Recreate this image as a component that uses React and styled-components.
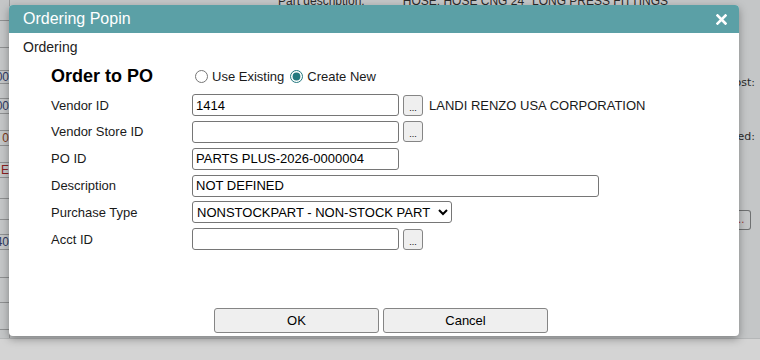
import React from 'react';
import styled, { createGlobalStyle } from 'styled-components';

const GlobalStyle = createGlobalStyle`
	html, body {
		margin: 0;
		padding: 0;
		background: #c4c6c7;
	}
	body {
		font-family: "Liberation Sans", Arial, sans-serif;
	}
`;

const Page = styled.div`
	position: relative;
	width: 760px;
	height: 360px;
	overflow: hidden;
	background: #c4c6c7;
	display: flex;
	flex-direction: column;
`;

const BackPage = styled.div`
	flex: 1;
	display: flex;
	flex-direction: row;
`;

const LeftStrip = styled.div`
	width: 9px;
	overflow: hidden;
	display: flex;
	flex-direction: column;
	border-right: 1px solid #9a9c9d;
`;

const StripCell = styled.div`
	height: ${props => props.h}px;
	border-bottom: 1px solid #8e9091;
	font-size: 12px;
	line-height: ${props => props.h}px;
	color: ${props => props.color || '#2f3a63'};
	display: flex;
	justify-content: flex-end;
	overflow: hidden;
	white-space: nowrap;
`;

const Middle = styled.div`
	flex: 1;
	display: flex;
	flex-direction: row;
	font-size: 12px;
	color: #2b2b2b;
	margin-top: -6px;
	padding-left: 268px;
	gap: 38px;
	white-space: nowrap;
`;

const RightStrip = styled.div`
	width: 22px;
	overflow: hidden;
	display: flex;
	flex-direction: column;
	font-family: "DejaVu Sans", Verdana, sans-serif;
	font-size: 11px;
	color: #2b2b2b;
	white-space: nowrap;
	padding-top: 76px;
`;

const RightText = styled.div`
	height: ${props => props.h}px;
	display: flex;
	justify-content: flex-end;
	overflow: hidden;
	padding-right: 5px;
`;

const BackButton = styled.div`
	width: 12px;
	height: 18px;
	border: 1px solid #6f7172;
	border-left: none;
	border-radius: 0 3px 3px 0;
	color: #9b2c2c;
	font-size: 10px;
	line-height: 18px;
`;

const BottomBand = styled.div`
	height: 21px;
	background: #d4d4d4;
	border-top: 1px solid #b5b7b8;
`;

const Modal = styled.div`
	position: absolute;
	left: 9px;
	top: 5px;
	width: 730px;
	height: 331px;
	background: #fff;
	border-radius: 4px;
	box-shadow: 0 3px 9px rgba(0, 0, 0, 0.35);
	display: flex;
	flex-direction: column;
`;

const Header = styled.div`
	height: 28px;
	background: #5ba0a6;
	border-radius: 4px 4px 0 0;
	display: flex;
	align-items: center;
	justify-content: space-between;
	padding: 0 12px 0 14px;
	color: #fff;
	font-size: 16px;
`;

const Body = styled.div`
	flex: 1;
	padding: 5px 14px 0;
	color: #1a1a1a;
`;

const Section = styled.div`
	font-size: 14px;
	line-height: 18px;
	color: #222;
`;

const Form = styled.div`
	display: grid;
	grid-template-columns: 141px auto;
	grid-auto-rows: 26.8px;
	align-items: center;
	padding-left: 28px;
	margin-top: 9px;
	font-size: 13px;
`;

const Title = styled.div`
	font-size: 18px;
	font-weight: bold;
	color: #000;
	padding-bottom: 4px;
`;

const Label = styled.div`
	color: #1a1a1a;
`;

const Field = styled.div`
	display: flex;
	align-items: center;
	gap: 4px;
`;

const Radios = styled.div`
	display: flex;
	align-items: center;
	padding-left: 1px;
	padding-bottom: 4px;
`;

const Radio = styled.input`
	margin: 0 4px 0 2px;
	width: 13px;
	height: 13px;
	accent-color: #23787e;
`;

const RadioLabel = styled.label`
	margin-right: 4px;
`;

const TextBox = styled.input`
	box-sizing: border-box;
	width: ${props => props.w}px;
	height: 22px;
	border: 1px solid #767676;
	border-radius: 3px;
	padding: 0 3px;
	font-family: "Liberation Sans", Arial, sans-serif;
	font-size: 13px;
	color: #000;
	outline: none;
`;

const Pick = styled.button`
	box-sizing: border-box;
	width: 20px;
	height: 21px;
	border: 1px solid #858585;
	border-radius: 3px;
	background: #efefef;
	font-family: "Liberation Sans", Arial, sans-serif;
	font-size: 9px;
	line-height: 9px;
	padding: 6px 0 0;
	color: #000;
`;

const VendorName = styled.span`
	margin-left: 2px;
	font-size: 13px;
	color: #1a1a1a;
`;

const Select = styled.select`
	box-sizing: border-box;
	width: 260px;
	height: 22px;
	border: 1px solid #767676;
	border-radius: 3px;
	padding: 0;
	font-family: "Liberation Sans", Arial, sans-serif;
	font-size: 13px;
	color: #000;
	background: #fff;
`;

const Footer = styled.div`
	display: flex;
	gap: 4px;
	padding: 0 0 3px 205px;
`;

const Button = styled.button`
	box-sizing: border-box;
	width: 165px;
	height: 25px;
	border: 1px solid #858585;
	border-radius: 3px;
	background: #efefef;
	font-family: "Liberation Sans", Arial, sans-serif;
	font-size: 13px;
	color: #000;
`;

const CloseIcon = () => (
	<svg width="11" height="11" viewBox="0 0 11 11">
		<path d="M1.5 1.5 L9.5 9.5 M9.5 1.5 L1.5 9.5" stroke="#fff" strokeWidth="2.6" strokeLinecap="square" />
	</svg>
);

const leftCells = [
	{ h: 20 }, { h: 26 }, { h: 22 }, { h: 12, t: '100' }, { h: 14 },
	{ h: 14, t: '100' }, { h: 16 }, { h: 14, t: '0', color: '#7a3a1a' }, { h: 16 },
	{ h: 14, t: 'E', color: '#8a2020' }, { h: 20 }, { h: 20 }, { h: 14 },
	{ h: 14, t: '140' }, { h: 27 }, { h: 24 }, { h: 26 },
];

export default function App() {
	return (
		<Page>
			<GlobalStyle />
			<BackPage>
				<LeftStrip>
					{leftCells.map((c, i) => (
						<StripCell key={i} h={c.h} color={c.color}><span>{c.t}</span></StripCell>
					))}
				</LeftStrip>
				<Middle>
					<span>Part description:</span>
					<span>HOSE: HOSE CNG 24'' LONG PRESS FITTINGS</span>
				</Middle>
				<RightStrip>
					<RightText h={54}><span>Cost:</span></RightText>
					<RightText h={80}><span>Ordered:</span></RightText>
					<BackButton>..</BackButton>
				</RightStrip>
			</BackPage>
			<BottomBand />

			<Modal>
				<Header>
					<span>Ordering Popin</span>
					<CloseIcon />
				</Header>
				<Body>
					<Section>Ordering</Section>
					<Form>
						<Title>Order to PO</Title>
						<Radios>
							<Radio type="radio" name="po" id="existing" />
							<RadioLabel htmlFor="existing">Use Existing</RadioLabel>
							<Radio type="radio" name="po" id="create" defaultChecked />
							<RadioLabel htmlFor="create">Create New</RadioLabel>
						</Radios>

						<Label>Vendor ID</Label>
						<Field>
							<TextBox w={207} defaultValue="1414" />
							<Pick>...</Pick>
							<VendorName>LANDI RENZO USA CORPORATION</VendorName>
						</Field>

						<Label>Vendor Store ID</Label>
						<Field>
							<TextBox w={207} defaultValue="" />
							<Pick>...</Pick>
						</Field>

						<Label>PO ID</Label>
						<Field>
							<TextBox w={207} defaultValue="PARTS PLUS-2026-0000004" />
						</Field>

						<Label>Description</Label>
						<Field>
							<TextBox w={407} defaultValue="NOT DEFINED" />
						</Field>

						<Label>Purchase Type</Label>
						<Field>
							<Select defaultValue="NONSTOCKPART">
								<option value="NONSTOCKPART">NONSTOCKPART - NON-STOCK PART</option>
							</Select>
						</Field>

						<Label>Acct ID</Label>
						<Field>
							<TextBox w={207} defaultValue="" />
							<Pick>...</Pick>
						</Field>
					</Form>
				</Body>
				<Footer>
					<Button>OK</Button>
					<Button>Cancel</Button>
				</Footer>
			</Modal>
		</Page>
	);
}
